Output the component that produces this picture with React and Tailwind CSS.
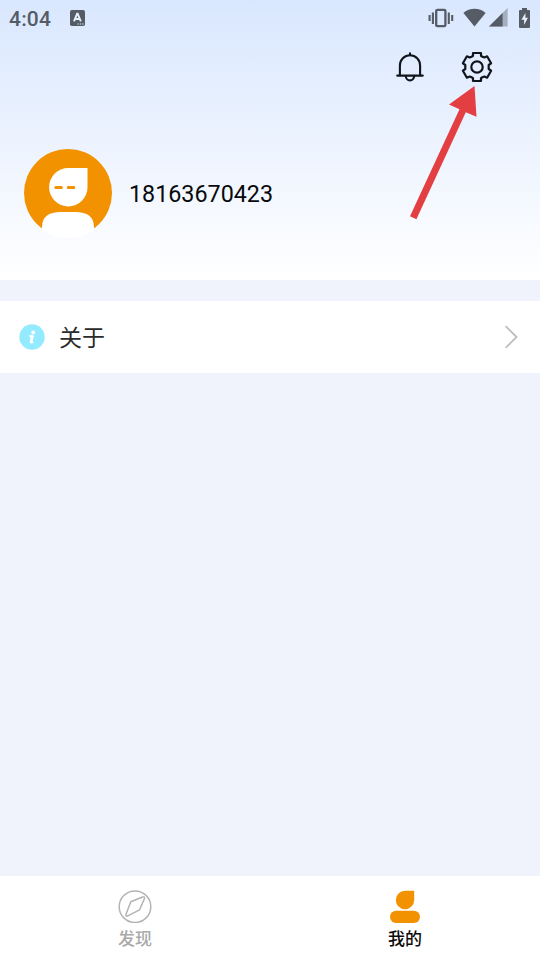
import React from 'react';

function StatusBar() {
  return (
    <div className="flex h-9 items-center justify-between pl-[9px] pr-[10px] text-[#555c66]">
      <div className="flex items-center gap-[19px]">
        <span className="pt-[2px] font-[Roboto] text-[21px] leading-6 font-medium tracking-[0.2px]">4:04</span>
        <svg width="15" height="16" viewBox="0 0 15 16">
          <rect width="15" height="16" rx="1.8" fill="currentColor" />
          <path d="M4 11.4 7.1 3.8h.6L10.8 11.4M5.2 9h4.4" fill="none" stroke="#e7effd" strokeWidth="1.9" />
          <path d="M7.5 14h1.3M9.9 14h1.3M12.3 14h1.3" stroke="#e7effd" strokeWidth="1.2" />
        </svg>
      </div>
      <div className="-mt-px flex items-center">
        <svg width="26" height="20" viewBox="0 0 26 20" fill="none" stroke="currentColor">
          <rect x="8.2" y="1.9" width="9.2" height="16.2" rx="1.2" strokeWidth="2.3" />
          <path d="M4.9 4.5v11.4M20.8 4.5v11.4M1.6 7v6M24.2 7v6" strokeWidth="2.1" />
        </svg>
        <svg width="23" height="19" viewBox="0 0 23 19" className="ml-[9px]" fill="currentColor">
          <path d="M11.5 18.6.4 4.9C6.5-.7 16.5-.7 22.6 4.9Z" />
        </svg>
        <svg width="19" height="19" viewBox="0 0 19 19" className="ml-[3px]" fill="currentColor">
          <path d="M18.6 0v18.6H0Z" opacity=".42" />
          <path d="M13.6 5v13.6H0Z" />
        </svg>
        <svg width="11" height="20" viewBox="0 0 11 20" className="ml-[11px]" fill="currentColor">
          <path d="M3 0h5v2h2q1 0 1 1v16q0 1-1 1H1q-1 0-1-1V3q0-1 1-1h2Z" />
          <path d="M6.4 5 2.4 11.7h2.7V17l3.8-7.2H6.4Z" fill="#e7effd" />
        </svg>
      </div>
    </div>
  );
}

function BellIcon() {
  return (
    <svg width="28" height="30" viewBox="0 0 28 30" fill="none" stroke="#11151b" strokeWidth="2.1">
      <path d="M3.9 23.3V13.4a10.1 10.1 0 0 1 20.2 0v9.9" />
      <path d="M1.2 23.6h25.6M14 3.2V1.4" strokeLinecap="round" />
      <path d="M9.8 24a4.2 4.4 0 0 0 8.4 0" />
    </svg>
  );
}

function GearIcon() {
  return (
    <svg width="32" height="32" viewBox="-16 -16 32 32" fill="none" stroke="#11151b" strokeWidth="2.2">
      <path
        d="M-4-14H4V-11.2Q5.2-10.2 7.4-9.5L10.1-10.7 14.1-3.7 11.7-2V2L14.1 3.7 10.1 10.7 7.4 9.5Q5.2 10.2 4 11.2V14H-4V11.2Q-5.2 10.2-7.4 9.5L-10.1 10.7-14.1 3.7-11.7 2V-2L-14.1-3.7-10.1-10.7-7.4-9.5Q-5.2-10.2-4-11.2Z"
        strokeLinejoin="round"
      />
      <circle r="5.7" />
    </svg>
  );
}

function Avatar() {
  return (
    <svg width="88" height="88" viewBox="0 0 88 88" className="overflow-visible">
      <defs>
        <clipPath id="avatar-body">
          <circle cx="44" cy="44" r="45.2" />
        </clipPath>
      </defs>
      <circle cx="44" cy="44" r="44" fill="#f39200" />
      <path d="M63.5 19v19.2A19.2 19.2 0 1 1 44.3 19Z" fill="#fff" />
      <path d="M18 90V78q0-15 19-15h14q19 0 19 15v12Z" fill="#fff" clipPath="url(#avatar-body)" />
      <path d="M31.8 38.5h5.6M44.2 38.5h5.6" stroke="#f39200" strokeWidth="3" strokeLinecap="round" />
    </svg>
  );
}

function PointerArrow() {
  return (
    <svg width="70" height="136" viewBox="0 0 70 136" className="absolute left-[408px] top-[85px]">
      <path d="M66.5 1 41 19.5 51.5 24.3 2 131.3 8.4 134.3 57.8 27.2 68.5 31.7Z" fill="#e33e41" />
    </svg>
  );
}

function TabItem({ label, active, children }) {
  return (
    <button className="flex flex-1 flex-col items-center justify-start pt-[13px]">
      {children}
      <span
        className={`mt-1 text-[17px] leading-6 font-medium ${active ? 'text-[#0c0c0c]' : 'text-[#a9a9a9]'}`}
      >
        {label}
      </span>
    </button>
  );
}

export default function App() {
  return (
    <div className="relative flex h-[960px] w-[540px] flex-col overflow-hidden bg-[#f0f3fc] font-['Roboto','Noto_Sans_CJK_SC',sans-serif]">
      <header className="h-[280px] bg-linear-to-b from-[#d9e7fe] to-white">
        <StatusBar />
        <div className="flex items-center justify-end gap-[37px] pr-[47px] pt-[15px]">
          <BellIcon />
          <GearIcon />
        </div>
        <div className="flex items-center gap-[17px] pl-6 pt-[66px]">
          <Avatar />
          <span className="pt-[2px] text-[23.3px] leading-8 text-[#080a0c]">18163670423</span>
        </div>
      </header>

      {/* About row */}
      <div className="mt-[21px] flex h-[72px] items-center bg-white pl-[19px] pr-[21px]">
        <svg width="26" height="26" viewBox="0 0 26 26">
          <circle cx="13" cy="13" r="12.7" fill="#94ebff" />
          <circle cx="14.2" cy="8.4" r="1.9" fill="#fff" />
          <path d="M10.4 12.2h3.2l-1.5 5.4q-.2 1 2 .2" fill="none" stroke="#fff" strokeWidth="2.6" strokeLinejoin="round" />
        </svg>
        <span className="ml-[14px] flex-1 pt-1 text-[23px] leading-8 text-[#2b2b2b]">关于</span>
        <svg width="14" height="24" viewBox="0 0 14 24" fill="none" stroke="#bdbdbd" strokeWidth="1.8">
          <path d="M.6 1.2 11.6 12 .6 22.8" />
        </svg>
      </div>

      <nav className="mt-auto flex h-[84px] bg-white">
        <TabItem label="发现">
          <svg width="34" height="34" viewBox="0 0 34 34" fill="none" stroke="#b3b3b3" strokeWidth="1.5">
            <circle cx="17" cy="17.7" r="15.8" />
            <path d="M12.8 12.8 24.6 8Q27 7.4 26.4 9.8L21.6 20.8 9.8 26.8Q7.2 27.7 8 25.2Z" strokeLinejoin="round" />
          </svg>
        </TabItem>
        <TabItem label="我的" active>
          <svg width="32" height="34" viewBox="0 0 32 34" fill="#f39200">
            <path d="M25.2 1.8V11A9.2 9.2 0 1 1 16 1.8Z" />
            <rect x="1" y="21.8" width="30" height="12.2" rx="6.1" />
          </svg>
        </TabItem>
      </nav>

      <PointerArrow />
    </div>
  );
}
